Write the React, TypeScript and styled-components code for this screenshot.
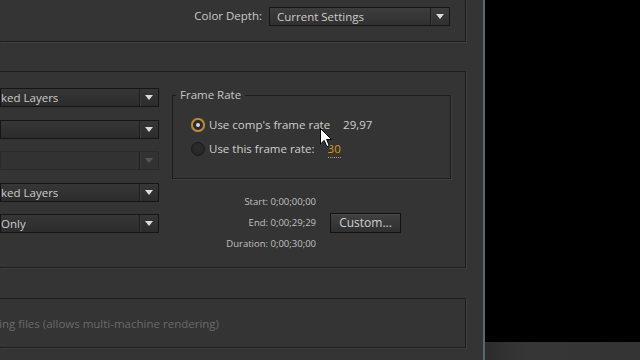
import React from "react";
import styled, { createGlobalStyle, css } from "styled-components";

const GlobalStyle = createGlobalStyle`
  html, body {
    margin: 0;
    padding: 0;
    background: #343434;
    overflow: hidden;
  }
  * {
    box-sizing: border-box;
  }
`;

const Screen = styled.div`
  position: relative;
  display: flex;
  width: 640px;
  height: 360px;
  overflow: hidden;
  background: #343434;
  font-family: "Open Sans", "DejaVu Sans", sans-serif;
  font-size: 11.5px;
  color: #cacaca;
`;

const DialogArea = styled.div`
  width: 483px;
  flex: 0 0 483px;
  padding-right: 17px;
  display: flex;
  flex-direction: column;
`;

const Panel = styled.div<{ $top?: boolean }>`
  border: 1px solid #1d1d1d;
  border-left: none;
  ${({ $top }) =>
    $top &&
    css`
      border-top: none;
    `}
  box-shadow: 1px 1px 0 #3f3f3f;
`;

const TopPanel = styled(Panel)`
  height: 42px;
  display: flex;
  justify-content: flex-end;
  align-items: flex-start;
  padding: 7px 15px 0 0;
`;

const FieldLabel = styled.span`
  line-height: 18px;
  margin-right: 7px;
`;

const SelectBox = styled.div<{ $width: number; $disabled?: boolean; $light?: boolean }>`
  display: flex;
  width: ${({ $width }) => $width}px;
  height: 19px;
  border: 1px solid #151515;
  background: ${({ $light }) =>
    $light
      ? "linear-gradient(#3d3d3d, #303030)"
      : "linear-gradient(#363636, #2c2c2c)"};
  ${({ $disabled }) =>
    $disabled &&
    css`
      border-color: #2a2a2a;
      background: #323232;
    `}
`;

const SelectText = styled.span<{ $inset: number }>`
  flex: 1;
  padding-left: ${({ $inset }) => $inset}px;
  line-height: 17px;
  white-space: nowrap;
  overflow: hidden;
  color: #cccccc;
`;

const SelectArrow = styled.span<{ $disabled?: boolean }>`
  flex: 0 0 19px;
  display: flex;
  align-items: center;
  justify-content: center;
  border-left: 1px solid #1c1c1c;
  box-shadow: inset 1px 0 0 #3c3c3c;

  &::after {
    content: "";
    border-left: 4px solid transparent;
    border-right: 4px solid transparent;
    border-top: 5px solid ${({ $disabled }) => ($disabled ? "#565656" : "#dcdcdc")};
  }
`;

const MainPanel = styled(Panel)`
  margin-top: 29px;
  height: 197px;
  display: flex;
  align-items: flex-start;
  padding-top: 16px;
`;

const LeftStack = styled.div`
  width: 159px;
  display: flex;
  flex-direction: column;
  gap: 12.5px;
`;

const RightColumn = styled.div`
  width: 279px;
  margin-left: 13px;
  margin-top: -1px;
  display: flex;
  flex-direction: column;
`;

const FrameRateSet = styled.fieldset`
  margin: 0;
  padding: 0;
  height: 92px;
  border: 1px solid #1c1c1c;
  box-shadow: 1px 1px 0 #3f3f3f;
  min-width: 0;
`;

const Legend = styled.legend`
  margin-left: 3px;
  padding: 0 4px;
  line-height: 16px;
  color: #c6c6c6;
`;

const RadioList = styled.div`
  display: flex;
  flex-direction: column;
  gap: 4px;
  margin: 12px 0 0 18px;
`;

const RadioRow = styled.div`
  display: flex;
  align-items: center;
  height: 20px;
`;

const Radio = styled.span<{ $checked?: boolean }>`
  position: relative;
  width: 14px;
  height: 14px;
  border-radius: 50%;
  margin-right: 4px;
  background: radial-gradient(circle at 50% 40%, #2e2e2e, #232323);
  border: 1px solid #1a1a1a;
  ${({ $checked }) =>
    $checked &&
    css`
      border: 2px solid #b98a35;
      background: #2a2a2a;
      box-shadow: 0 0 1px #8a6a2a;
      &::after {
        content: "";
        position: absolute;
        left: 3px;
        top: 3px;
        width: 4px;
        height: 4px;
        border-radius: 50%;
        background: #d6d2e6;
      }
    `}
`;

const RadioLabel = styled.span`
  line-height: 20px;
  color: #cfcfcf;
`;

const RateValue = styled.span<{ $editable?: boolean }>`
  margin-left: 13px;
  line-height: 16px;
  color: #cfcfcf;
  ${({ $editable }) =>
    $editable &&
    css`
      color: #d39a2c;
      border-bottom: 1px dotted #d39a2c;
    `}
`;

const TimeBlock = styled.div`
  display: flex;
  margin-top: 12px;
`;

const TimeList = styled.div`
  width: 144px;
  text-align: right;
  font-size: 9.5px;
  line-height: 21px;
  color: #c0c0c0;
`;

const Button = styled.div`
  align-self: center;
  margin-left: 14px;
  width: 71px;
  height: 20px;
  border: 1px solid #121212;
  background: linear-gradient(#404040, #2f2f2f);
  box-shadow: inset 0 1px 0 #4a4a4a;
  text-align: center;
  line-height: 17px;
  font-size: 12px;
  color: #d0d0d0;
`;

const BottomPanel = styled(Panel)`
  margin-top: 30px;
  height: 50px;
  display: flex;
  align-items: center;
`;

const DisabledText = styled.span`
  margin-left: -1px;
  color: #6a6a6a;
  white-space: nowrap;
`;

const Viewer = styled.div`
  flex: 1;
  display: flex;
  flex-direction: column;
  border-left: 2px solid #55677a;
`;

const ViewerScreen = styled.div`
  height: 342px;
  background: #000;
`;

const ViewerFooter = styled.div`
  flex: 1;
  background: linear-gradient(90deg, #2c2c2c, #363636 40px, #343434);
`;

const Cursor = styled.svg`
  position: absolute;
  left: 320px;
  top: 128px;
`;

interface ISelectProps {
  text?: string;
  width: number;
  inset?: number;
  disabled?: boolean;
  light?: boolean;
}

const Select: React.FC<ISelectProps> = ({ text = "", width, inset = 0, disabled, light }) => (
  <SelectBox $width={width} $disabled={disabled} $light={light}>
    <SelectText $inset={inset}>{text}</SelectText>
    <SelectArrow $disabled={disabled} />
  </SelectBox>
);

const App: React.FC = () => {
  return (
    <>
      <GlobalStyle />
      <Screen>
        <DialogArea>
          <TopPanel $top>
            <FieldLabel>Color Depth:</FieldLabel>
            <Select text="Current Settings" width={181} inset={7} light />
          </TopPanel>

          <MainPanel>
            <LeftStack>
              <Select text="ked Layers" width={159} />
              <Select width={159} />
              <Select width={159} disabled />
              <Select text="ked Layers" width={159} />
              <Select text="Only" width={159} />
            </LeftStack>

            <RightColumn>
              <FrameRateSet>
                <Legend>Frame Rate</Legend>
                <RadioList>
                  <RadioRow>
                    <Radio $checked />
                    <RadioLabel>Use comp's frame rate</RadioLabel>
                    <RateValue>29,97</RateValue>
                  </RadioRow>
                  <RadioRow>
                    <Radio />
                    <RadioLabel>Use this frame rate:</RadioLabel>
                    <RateValue $editable>30</RateValue>
                  </RadioRow>
                </RadioList>
              </FrameRateSet>

              <TimeBlock>
                <TimeList>
                  <div>Start: 0;00;00;00</div>
                  <div>End: 0;00;29;29</div>
                  <div>Duration: 0;00;30;00</div>
                </TimeList>
                <Button>Custom...</Button>
              </TimeBlock>
            </RightColumn>
          </MainPanel>

          <BottomPanel>
            <DisabledText>ing files (allows multi-machine rendering)</DisabledText>
          </BottomPanel>
        </DialogArea>

        <Viewer>
          <ViewerScreen />
          <ViewerFooter />
        </Viewer>

        <Cursor width="13" height="20" viewBox="0 0 13 20">
          <path
            d="M0.5 0.5 L0.5 16 L4.2 12.4 L6.8 18.6 L9.2 17.6 L6.6 11.5 L11.5 11.5 Z"
            fill="#fff"
            stroke="#000"
            strokeWidth="1"
            strokeLinejoin="round"
          />
        </Cursor>
      </Screen>
    </>
  );
};

export default App;
